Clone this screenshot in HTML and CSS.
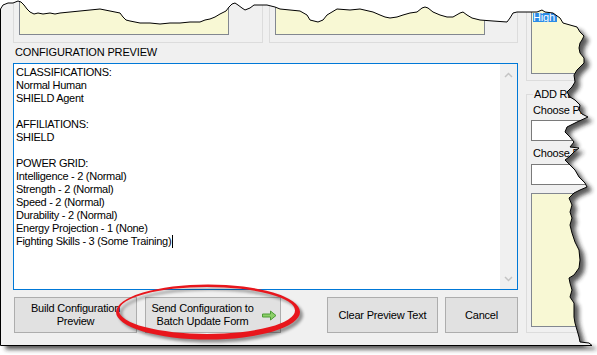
FILE: index.html
```html
<!DOCTYPE html>
<html lang="en">
  <head>
    <meta charset="UTF-8" />
    <title>Configuration Preview</title>
    <link rel="stylesheet" href="styles.css">
  </head>
  <body>
    <div class="window">
      <div class="left-col">
        <div class="top-row">
          <div class="group g1"><div class="note"></div></div>
          <div class="group g2"><div class="note"></div></div>
        </div>

        <div class="caption">CONFIGURATION PREVIEW</div>

        <div class="preview">
          <div class="preview-text">CLASSIFICATIONS:<br>Normal Human<br>SHIELD Agent<br><br>AFFILIATIONS:<br>SHIELD<br><br>POWER GRID:<br>Intelligence - 2 (Normal)<br>Strength - 2 (Normal)<br>Speed - 2 (Normal)<br>Durability - 2 (Normal)<br>Energy Projection - 1 (None)<br>Fighting Skills - 3 (Some Training)<span class="caret"></span></div>
          <div class="scrollbar">
            <svg width="9" height="6" viewBox="0 0 9 6"><polyline points="1,5 4.5,1.5 8,5" /></svg>
            <svg width="9" height="6" viewBox="0 0 9 6"><polyline points="1,1 4.5,4.5 8,1" /></svg>
          </div>
        </div>

        <div class="buttons">
          <button class="btn btn-build">Build Configuration<br>Preview</button>
          <button class="btn btn-send">
            <span>Send Configuration to<br>Batch Update Form</span>
            <svg width="15" height="11" viewBox="0 0 15 11"><path d="M0.5 4H8.5V1L14 5.5L8.5 10V7H0.5Z" /></svg>
          </button>
          <button class="btn btn-clear">Clear Preview Text</button>
          <button class="btn btn-cancel">Cancel</button>
        </div>
      </div>

      <div class="right-col">
        <div class="group side-top">
          <div class="note list"><span class="selected">High</span></div>
        </div>
        <fieldset class="add-box">
          <legend>ADD RELATIONSHIP</legend>
          <div class="field-label">Choose Primary Type</div>
          <div class="field"></div>
          <div class="field-label second">Choose Related Type</div>
          <div class="field narrow"></div>
          <div class="note tall"></div>
        </fieldset>
      </div>

      <!-- torn paper edge, shadow and the red marker ring lie over the window -->
      <svg class="paper" width="597" height="355" viewBox="0 0 597 355">
        <defs>
          <path id="edge" d="M0.5 9L3 5L8 3L13 3L18 1L21 2L24 5L27 9L30 12L34 14L38 13L43 14L50 13L55 14L60 13L70 12L80 11L90 10L100 9L105 10L110 11L115 12L120 13L123 17L126 20L130 21L135 22L140 23L150 23L160 24L170 23L180 23L190 22L200 22L205 20L210 19L215 17L220 14L226 11L229 7L232 4L235 3L238 5L242 8L245 10L250 8L254 5L260 5L267 5L275 7L280 9L290 10L300 11L307 15L310 20L318 22L323 20L327 15L332 12L337 9L350 10L360 9L373 12L380 15L385 17L390 18L397 17L403 15L410 13L417 12L422 8L425 7L428 8L433 12L440 15L447 17L453 17L460 13L463 12L467 15L472 18L480 20L493 21L507 22L510 18L513 13L517 12L527 12L537 12L542 10L545 12L553 13L560 18L563 23L570 25L577 27L580 32L584 36L582 40L580 43L579 48L580 53L584 58L584 63L580 67L577 70L574 75L575 82L572 87L567 92L570 97L575 100L580 105L579 110L582 114L588 117L577 122L567 127L565 132L570 137L574 142L570 147L579 148L574 152L569 157L565 160L570 165L575 170L579 177L585 183L587 187L580 190L574 193L569 198L572 205L570 212L572 218L570 225L572 233L575 242L579 250L580 260L579 268L574 275L569 278L570 283L572 290L570 297L574 303L574 310L574 317L575 323L577 330L579 337L580 342L589 343L592 345.5L0.5 345.5Z" />
          <clipPath id="outside">
            <path clip-rule="evenodd" d="M-5 -5H602V360H-5Z M0.5 9L3 5L8 3L13 3L18 1L21 2L24 5L27 9L30 12L34 14L38 13L43 14L50 13L55 14L60 13L70 12L80 11L90 10L100 9L105 10L110 11L115 12L120 13L123 17L126 20L130 21L135 22L140 23L150 23L160 24L170 23L180 23L190 22L200 22L205 20L210 19L215 17L220 14L226 11L229 7L232 4L235 3L238 5L242 8L245 10L250 8L254 5L260 5L267 5L275 7L280 9L290 10L300 11L307 15L310 20L318 22L323 20L327 15L332 12L337 9L350 10L360 9L373 12L380 15L385 17L390 18L397 17L403 15L410 13L417 12L422 8L425 7L428 8L433 12L440 15L447 17L453 17L460 13L463 12L467 15L472 18L480 20L493 21L507 22L510 18L513 13L517 12L527 12L537 12L542 10L545 12L553 13L560 18L563 23L570 25L577 27L580 32L584 36L582 40L580 43L579 48L580 53L584 58L584 63L580 67L577 70L574 75L575 82L572 87L567 92L570 97L575 100L580 105L579 110L582 114L588 117L577 122L567 127L565 132L570 137L574 142L570 147L579 148L574 152L569 157L565 160L570 165L575 170L579 177L585 183L587 187L580 190L574 193L569 198L572 205L570 212L572 218L570 225L572 233L575 242L579 250L580 260L579 268L574 275L569 278L570 283L572 290L570 297L574 303L574 310L574 317L575 323L577 330L579 337L580 342L589 343L592 345.5L0.5 345.5Z" />
          </clipPath>
          <clipPath id="shadow-zone">
            <path d="M555 25H602V360H0V340H555Z" />
          </clipPath>
          <filter id="soft" x="-10%" y="-10%" width="120%" height="120%">
            <feGaussianBlur stdDeviation="2.2" />
          </filter>
          <filter id="soft-ring" x="-10%" y="-30%" width="120%" height="160%">
            <feGaussianBlur stdDeviation="1.6" />
          </filter>
        </defs>

        <rect x="-5" y="-5" width="607" height="365" fill="#fff" clip-path="url(#outside)" />
        <g clip-path="url(#outside)">
          <g clip-path="url(#shadow-zone)">
            <use href="#edge" class="edge-shadow" transform="translate(5 4)" filter="url(#soft)" />
          </g>
        </g>
        <use href="#edge" class="edge-line" />

        <path class="ring-shadow" fill-rule="evenodd" filter="url(#soft-ring)" transform="translate(3 3)"
          d="M116 312a92 27.5 0 1 0 184 0a92 27.5 0 1 0 -184 0Z M119 310.5a88 23.5 0 1 0 176 0a88 23.5 0 1 0 -176 0Z" />
        <path class="ring" fill-rule="evenodd"
          d="M116 312a92 27.5 0 1 0 184 0a92 27.5 0 1 0 -184 0Z M119 310.5a88 23.5 0 1 0 176 0a88 23.5 0 1 0 -176 0Z" />
      </svg>
    </div>
  </body>
</html>
```

FILE: styles.css
```css
html {
  font-family: "Liberation Sans", Arial, sans-serif;
}

body {
  margin: 0;
  background-color: #fff;
  font-size: 11px;
  line-height: 13px;
  color: #000;
}

.window {
  position: relative;
  display: flex;
  box-sizing: border-box;
  width: 597px;
  height: 355px;
  padding-left: 13px;
  background-color: #f0f0f0;
  overflow: hidden;
}

.left-col {
  width: 505px;
  flex: none;
}

.right-col {
  flex: 1;
  margin-left: 8px;
  min-width: 0;
  letter-spacing: -0.2px;
}

.top-row {
  display: flex;
  height: 43px;
}

.group {
  box-sizing: border-box;
  border: 1px solid #dcdcdc;
  border-top: none;
}

.g1 {
  width: 250px;
  height: 43px;
  padding-left: 5px;
}

.g2 {
  width: 249px;
  height: 43px;
  margin-left: 6px;
  padding-left: 5px;
}

.note {
  box-sizing: border-box;
  background-color: #f8f8d4;
  border: 1px solid #828790;
  border-top: none;
}

.g1 .note,
.g2 .note {
  width: 210px;
  height: 35px;
}

.caption {
  margin-top: 3px;
  padding-left: 2px;
  letter-spacing: -0.15px;
}

.preview {
  display: flex;
  box-sizing: border-box;
  height: 227px;
  margin-top: 4px;
  border: 1px solid #0078d7;
  background-color: #fff;
}

.preview-text {
  flex: 1;
  padding: 2px 0 0 2px;
  letter-spacing: -0.28px;
}

.caret {
  display: inline-block;
  width: 1px;
  height: 13px;
  margin-left: 1px;
  vertical-align: top;
  background-color: #000;
}

.scrollbar {
  display: flex;
  flex-direction: column;
  justify-content: space-between;
  align-items: center;
  width: 17px;
  padding: 8px 0 7px;
  background-color: #f0f0f0;
}

.scrollbar polyline {
  fill: none;
  stroke: #c4c4c4;
  stroke-width: 1.5;
}

.buttons {
  display: flex;
  margin-top: 7px;
  padding-left: 1px;
}

.btn {
  display: flex;
  align-items: center;
  justify-content: center;
  box-sizing: border-box;
  height: 36px;
  padding: 0;
  font-family: inherit;
  font-size: 11px;
  line-height: 13px;
  letter-spacing: -0.2px;
  color: #000;
  background-color: #e1e1e1;
  border: 1px solid #adadad;
  text-align: center;
}

.btn-build {
  width: 123px;
}

.btn-send {
  width: 136px;
  margin-left: 8px;
  gap: 8px;
  padding-left: 2px;
}

.btn-send path {
  fill: #8ccf68;
  stroke: #4c9c36;
  stroke-width: 1;
}

.btn-clear {
  width: 111px;
  margin-left: 46px;
}

.btn-cancel {
  width: 73px;
  margin-left: 7px;
}

.side-top {
  height: 81px;
  padding-left: 4px;
  border-right: none;
}

.list {
  height: 74px;
  padding: 12px 0 0 1px;
}

.selected {
  display: inline-block;
  width: 24px;
  height: 9px;
  line-height: 9px;
  overflow: hidden;
  color: #fff;
  background-color: #2a8be6;
}

.add-box {
  box-sizing: border-box;
  height: 245px;
  margin: 7px 0 0;
  padding: 0 0 6px 4px;
  border: 1px solid #dcdcdc;
  border-right: none;
}

.add-box legend {
  margin-left: 2px;
  padding: 0 1px;
  white-space: nowrap;
}

.field-label {
  margin-top: 3px;
  padding-left: 2px;
  white-space: nowrap;
}

.field-label.second {
  margin-top: 6px;
}

.field {
  box-sizing: border-box;
  height: 21px;
  margin-top: 3px;
  background-color: #fff;
  border: 1px solid #7a7a7a;
}

.field.narrow {
  margin-top: 4px;
}

.tall {
  height: 134px;
  margin-top: 8px;
  border-top: 1px solid #828790;
}

.paper {
  position: absolute;
  top: 0;
  left: 0;
  pointer-events: none;
}

.edge-shadow {
  fill: #222;
  opacity: 0.75;
}

.edge-line {
  fill: none;
  stroke: #000;
  stroke-width: 1;
}

.ring {
  fill: #e8161c;
}

.ring-shadow {
  fill: #000;
  opacity: 0.4;
}
```
